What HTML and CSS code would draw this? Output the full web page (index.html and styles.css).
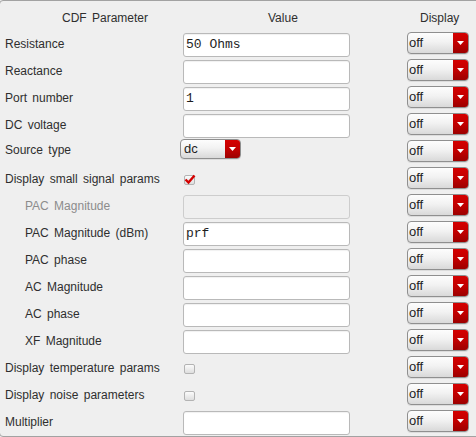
FILE: index.html
```html
<!DOCTYPE html>
<html>
<head>
<meta charset="utf-8">
<link rel="stylesheet" href="styles.css">
</head>
<body>
<div class="panel">
  <div class="row head">
    <div class="h-param">CDF Parameter</div>
    <div class="h-value">Value</div>
    <div class="h-disp">Display</div>
  </div>

  <div class="row">
    <div class="label">Resistance</div>
    <div class="cell"><div class="field">50 Ohms</div></div>
    <div class="cell"><div class="combo"><span class="ctext">off</span><span class="carrow"><svg width="7" height="4" viewBox="0 0 7 4"><path d="M0 0H7L3.5 4Z" fill="#fff"/></svg></span></div></div>
  </div>

  <div class="row">
    <div class="label">Reactance</div>
    <div class="cell"><div class="field"></div></div>
    <div class="cell"><div class="combo"><span class="ctext">off</span><span class="carrow"><svg width="7" height="4" viewBox="0 0 7 4"><path d="M0 0H7L3.5 4Z" fill="#fff"/></svg></span></div></div>
  </div>

  <div class="row">
    <div class="label">Port number</div>
    <div class="cell"><div class="field">1</div></div>
    <div class="cell"><div class="combo"><span class="ctext">off</span><span class="carrow"><svg width="7" height="4" viewBox="0 0 7 4"><path d="M0 0H7L3.5 4Z" fill="#fff"/></svg></span></div></div>
  </div>

  <div class="row">
    <div class="label">DC voltage</div>
    <div class="cell"><div class="field"></div></div>
    <div class="cell"><div class="combo"><span class="ctext">off</span><span class="carrow"><svg width="7" height="4" viewBox="0 0 7 4"><path d="M0 0H7L3.5 4Z" fill="#fff"/></svg></span></div></div>
  </div>

  <div class="row">
    <div class="label label-up">Source type</div>
    <div class="cell"><div class="combo combo-src"><span class="ctext">dc</span><span class="carrow"><svg width="7" height="4" viewBox="0 0 7 4"><path d="M0 0H7L3.5 4Z" fill="#fff"/></svg></span></div></div>
    <div class="cell"><div class="combo"><span class="ctext">off</span><span class="carrow"><svg width="7" height="4" viewBox="0 0 7 4"><path d="M0 0H7L3.5 4Z" fill="#fff"/></svg></span></div></div>
  </div>

  <div class="row">
    <div class="label">Display small signal params</div>
    <div class="cell"><div class="check"><svg class="tick" width="12" height="11" viewBox="0 0 12 11"><path d="M1.5 5.5L4.5 8.5L10.5 1.5" fill="none" stroke="#d40000" stroke-width="2.4"/></svg></div></div>
    <div class="cell"><div class="combo"><span class="ctext">off</span><span class="carrow"><svg width="7" height="4" viewBox="0 0 7 4"><path d="M0 0H7L3.5 4Z" fill="#fff"/></svg></span></div></div>
  </div>

  <div class="row">
    <div class="label sub disabled">PAC Magnitude</div>
    <div class="cell"><div class="field field-off"></div></div>
    <div class="cell"><div class="combo"><span class="ctext">off</span><span class="carrow"><svg width="7" height="4" viewBox="0 0 7 4"><path d="M0 0H7L3.5 4Z" fill="#fff"/></svg></span></div></div>
  </div>

  <div class="row">
    <div class="label sub">PAC Magnitude (dBm)</div>
    <div class="cell"><div class="field">prf</div></div>
    <div class="cell"><div class="combo"><span class="ctext">off</span><span class="carrow"><svg width="7" height="4" viewBox="0 0 7 4"><path d="M0 0H7L3.5 4Z" fill="#fff"/></svg></span></div></div>
  </div>

  <div class="row">
    <div class="label sub">PAC phase</div>
    <div class="cell"><div class="field"></div></div>
    <div class="cell"><div class="combo"><span class="ctext">off</span><span class="carrow"><svg width="7" height="4" viewBox="0 0 7 4"><path d="M0 0H7L3.5 4Z" fill="#fff"/></svg></span></div></div>
  </div>

  <div class="row">
    <div class="label sub">AC Magnitude</div>
    <div class="cell"><div class="field"></div></div>
    <div class="cell"><div class="combo"><span class="ctext">off</span><span class="carrow"><svg width="7" height="4" viewBox="0 0 7 4"><path d="M0 0H7L3.5 4Z" fill="#fff"/></svg></span></div></div>
  </div>

  <div class="row">
    <div class="label sub">AC phase</div>
    <div class="cell"><div class="field"></div></div>
    <div class="cell"><div class="combo"><span class="ctext">off</span><span class="carrow"><svg width="7" height="4" viewBox="0 0 7 4"><path d="M0 0H7L3.5 4Z" fill="#fff"/></svg></span></div></div>
  </div>

  <div class="row">
    <div class="label sub">XF Magnitude</div>
    <div class="cell"><div class="field"></div></div>
    <div class="cell"><div class="combo"><span class="ctext">off</span><span class="carrow"><svg width="7" height="4" viewBox="0 0 7 4"><path d="M0 0H7L3.5 4Z" fill="#fff"/></svg></span></div></div>
  </div>

  <div class="row">
    <div class="label">Display temperature params</div>
    <div class="cell"><div class="check"></div></div>
    <div class="cell"><div class="combo"><span class="ctext">off</span><span class="carrow"><svg width="7" height="4" viewBox="0 0 7 4"><path d="M0 0H7L3.5 4Z" fill="#fff"/></svg></span></div></div>
  </div>

  <div class="row">
    <div class="label">Display noise parameters</div>
    <div class="cell"><div class="check"></div></div>
    <div class="cell"><div class="combo"><span class="ctext">off</span><span class="carrow"><svg width="7" height="4" viewBox="0 0 7 4"><path d="M0 0H7L3.5 4Z" fill="#fff"/></svg></span></div></div>
  </div>

  <div class="row">
    <div class="label">Multiplier</div>
    <div class="cell"><div class="field"></div></div>
    <div class="cell"><div class="combo"><span class="ctext">off</span><span class="carrow"><svg width="7" height="4" viewBox="0 0 7 4"><path d="M0 0H7L3.5 4Z" fill="#fff"/></svg></span></div></div>
  </div>
</div>
</body>
</html>
```

FILE: styles.css
```css
html, body {
  margin: 0;
  padding: 0;
  background: #efefef;
  overflow: hidden;
}

body {
  font-family: "Liberation Sans", Arial, sans-serif;
  font-size: 12px;
  color: #2e2e2e;
}

.panel {
  box-sizing: border-box;
  width: 482px;
  height: 437px;
  margin-left: -1px;
  border: 1px solid #a2a2a2;
  border-radius: 4px;
  background: #efefef;
}

.row {
  display: grid;
  grid-template-columns: 183px 224px 70px;
  height: 27px;
  align-items: start;
}

.row.head {
  height: 30px;
}

.head > div {
  line-height: 14px;
  padding-top: 10px;
  word-spacing: 2px;
}

.h-param { padding-left: 62px; }
.h-value { padding-left: 85px; }
.h-disp  { padding-left: 13px; }

.label {
  line-height: 26px;
  padding-left: 5px;
  white-space: nowrap;
  word-spacing: 2px;
}

.label-up {
  line-height: 22px;
}

.label.sub {
  padding-left: 25px;
}

.label.disabled {
  color: #8c8c8c;
}

.cell {
  display: flex;
}

.field {
  box-sizing: border-box;
  width: 167px;
  height: 24px;
  margin-top: 2px;
  border: 1px solid #b9b9b9;
  border-radius: 3px;
  background: #ffffff;
  box-shadow: inset 0 1px 1px rgba(0, 0, 0, 0.06);
  padding-left: 2px;
  font-family: "Liberation Mono", "Courier New", monospace;
  font-size: 13px;
  line-height: 22px;
  color: #1e1e1e;
}

.field-off {
  background: #efefef;
  border-color: #cdcdcd;
  box-shadow: none;
}

.combo {
  box-sizing: border-box;
  width: 62px;
  height: 22px;
  margin-top: 1px;
  display: flex;
  border: 1px solid #8f8f8f;
  border-radius: 4px;
  overflow: hidden;
  background: linear-gradient(#fdfdfd, #f2f2f2 45%, #d9d9d9);
  box-shadow: 0 1px 0 rgba(0, 0, 0, 0.08);
}

.combo-src {
  width: 61px;
  height: 20px;
  margin-top: 0;
  margin-left: -3px;
}

.ctext {
  flex: 1;
  padding-left: 1px;
  font-size: 13px;
  line-height: 19px;
  color: #222;
}

.combo-src .ctext {
  line-height: 17px;
  padding-left: 3px;
}

.carrow {
  width: 15px;
  display: flex;
  align-items: center;
  justify-content: center;
  background: linear-gradient(#d40000, #c20000 50%, #9c0000);
}

.check {
  position: relative;
  box-sizing: border-box;
  width: 11px;
  height: 10px;
  margin-top: 9px;
  margin-left: 1px;
  border: 1px solid #b3b3b3;
  border-radius: 2px;
  background: linear-gradient(#fbfbfb, #dedede);
}

.tick {
  position: absolute;
  left: -1px;
  top: -2px;
}
```
